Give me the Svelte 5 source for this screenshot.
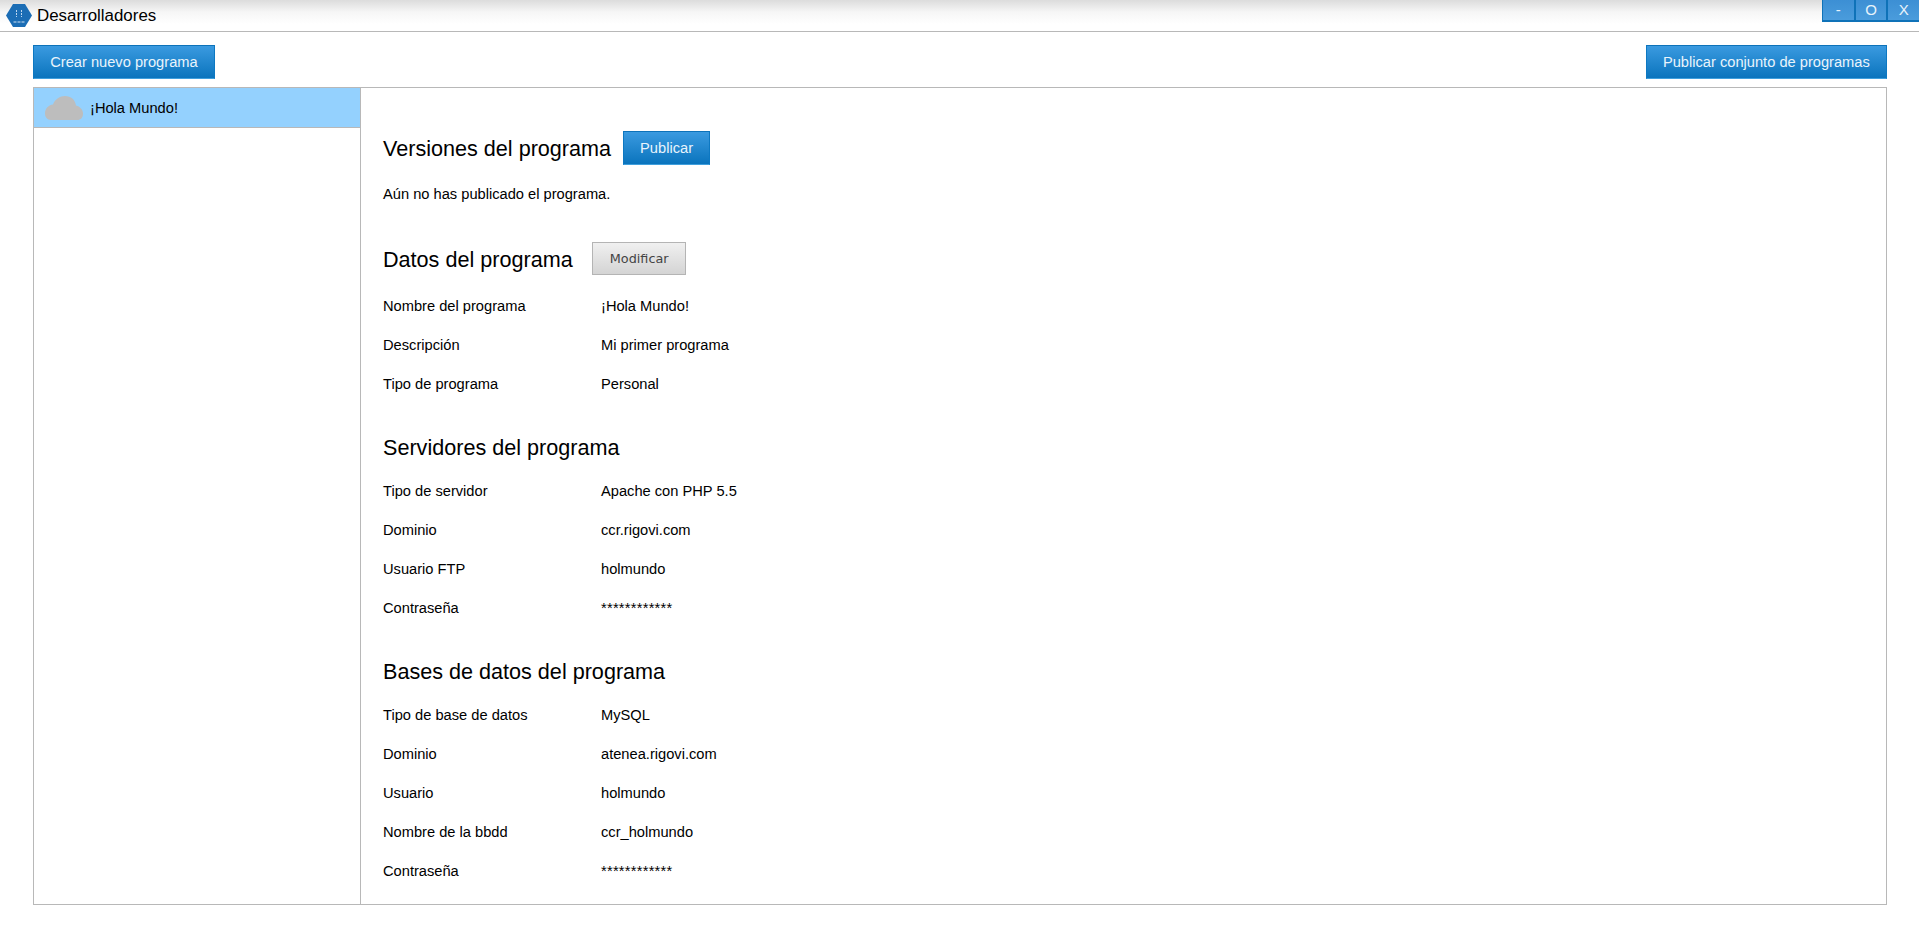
<script>
  const sections = [
    {
      title: 'Servidores del programa',
      rows: [
        ['Tipo de servidor', 'Apache con PHP 5.5'],
        ['Dominio', 'ccr.rigovi.com'],
        ['Usuario FTP', 'holmundo'],
        ['Contraseña', '************']
      ]
    },
    {
      title: 'Bases de datos del programa',
      rows: [
        ['Tipo de base de datos', 'MySQL'],
        ['Dominio', 'atenea.rigovi.com'],
        ['Usuario', 'holmundo'],
        ['Nombre de la bbdd', 'ccr_holmundo'],
        ['Contraseña', '************']
      ]
    }
  ];

  const datos = [
    ['Nombre del programa', '¡Hola Mundo!'],
    ['Descripción', 'Mi primer programa'],
    ['Tipo de programa', 'Personal']
  ];
</script>

<header class="titlebar">
  <svg class="logo" width="26" height="23" viewBox="0 0 26 23">
    <polygon points="7,0 19,0 26,11.5 19,23 7,23 0,11.5" fill="#1b6db5" />
    <path d="M10.500 6v7M15.500 6v7" stroke="#bcd6ee" stroke-width="1" stroke-dasharray="2 1" />
    <path d="M7.500 18h11" stroke="#cfe2f3" stroke-width="1.200" stroke-dasharray="3 1" />
  </svg>
  <span class="apptitle">Desarrolladores</span>
  <div class="winbtns">
    <button>-</button>
    <button>O</button>
    <button>X</button>
  </div>
</header>

<div class="toolbar">
  <button class="btn blue">Crear nuevo programa</button>
  <button class="btn blue">Publicar conjunto de programas</button>
</div>

<div class="panel">
  <aside class="sidebar">
    <div class="item">
      <svg width="38" height="24" viewBox="0 0 38 24">
        <path d="M6 24C2 24 0 21 0 17.500C0 13 3 9 8 8.500C10 3 15 0 20 0C26 0 30 3.500 31 9.500C35 10.500 38 13.500 38 17.500C38 21.500 36 24 32 24Z" fill="#bdbdbd" />
      </svg>
      <span>¡Hola Mundo!</span>
    </div>
  </aside>
  <main class="content">
    <div class="head">
      <h2>Versiones del programa</h2>
      <button class="btn blue small">Publicar</button>
    </div>
    <p class="note">Aún no has publicado el programa.</p>

    <div class="head datos">
      <h2>Datos del programa</h2>
      <button class="btn grey">Modificar</button>
    </div>
    <div class="rows first">
      {#each datos as [label, value]}
        <div class="row"><span>{label}</span><span>{value}</span></div>
      {/each}
    </div>

    {#each sections as s}
      <h2 class="sec">{s.title}</h2>
      <div class="rows">
        {#each s.rows as [label, value]}
          <div class="row"><span>{label}</span><span class:pass={value.startsWith('*')}>{value}</span></div>
        {/each}
      </div>
    {/each}
  </main>
</div>

<style>
  :global(body) {
    margin: 0;
    background: #fff;
    font-family: "Liberation Sans", Arial, sans-serif;
    font-size: 14.67px;
    color: #000;
  }
  .titlebar {
    display: flex;
    align-items: center;
    height: 31px;
    box-sizing: content-box;
    border-bottom: 1px solid #b8b8b8;
    background: linear-gradient(#dcdcdc 0, #f6f6f6 12px, #fff 24px);
    padding-left: 6px;
    position: relative;
  }
  .logo {
    margin-top: -1px;
  }
  .apptitle {
    font-size: 16.9px;
    margin-left: 5px;
  }
  .winbtns {
    position: absolute;
    top: 0;
    right: 0;
    display: flex;
    height: 21px;
    background: #0f72b8;
    padding: 0 0 1px 1px;
    gap: 2px;
  }
  .winbtns button {
    width: 30.7px;
    height: 20px;
    border: 0;
    padding: 0;
    background: linear-gradient(#3c8fd4, #4a9cdc);
    color: #e8f3fb;
    font-family: "Liberation Sans", sans-serif;
    font-size: 15px;
    line-height: 20px;
  }
  .toolbar {
    display: flex;
    justify-content: space-between;
    padding: 13px 32px 0 33px;
  }
  .btn {
    font-family: "Liberation Sans", Arial, sans-serif;
    font-size: 14.67px;
    height: 34px;
    padding: 0 16.2px;
    box-sizing: border-box;
    cursor: pointer;
  }
  .blue {
    color: #e9f4fc;
    background: linear-gradient(#3a9ae0, #0a74bd);
    border: 0;
    border-top: 1px solid #0d72b9;
    border-bottom: 1px solid #3f9fdd;
    border-left: 1px solid #0d78c2;
    border-right: 1px solid #0d78c2;
  }
  .grey {
    font-family: "DejaVu Sans", Verdana, sans-serif;
    font-size: 12.8px;
    color: #444;
    width: 94px;
    height: 33px;
    padding: 0;
    background: linear-gradient(#f0f0f0, #d4d4d4);
    border: 1px solid #b4b4b4;
    margin-left: 19.5px;
  }
  .small {
    width: 87px;
    padding: 0;
    margin-left: 12px;
  }
  .panel {
    display: flex;
    margin: 8px 32px 0 33px;
    height: 818px;
    border: 1px solid #b8b8b8;
    box-sizing: border-box;
  }
  .sidebar {
    width: 326px;
    flex: none;
    border-right: 1px solid #b8b8b8;
  }
  .item {
    display: flex;
    align-items: center;
    gap: 7px;
    height: 39px;
    padding-left: 11px;
    background: #94d1fe;
    border-bottom: 1px solid #b8b8b8;
  }
  .item svg {
    margin-top: 1px;
  }
  .content {
    flex: 1;
    padding: 43px 0 0 22px;
  }
  .head {
    display: flex;
    align-items: center;
    height: 34px;
  }
  .head h2 {
    padding-top: 2px;
  }
  .head.datos {
    height: 33px;
    margin-top: 40px;
  }
  h2 {
    font-size: 21.6px;
    font-weight: normal;
    margin: 0;
  }
  .sec {
    height: 34px;
    line-height: 34px;
    margin-top: 27px;
  }
  .note {
    margin: 21px 0 0;
    line-height: 16px;
  }
  .rows {
    margin-top: 7px;
  }
  .rows.first {
    margin-top: 12px;
  }
  .row {
    display: grid;
    grid-template-columns: 218px 1fr;
    height: 39px;
    line-height: 39px;
  }
  .pass {
    letter-spacing: 0.25px;
  }
</style>
